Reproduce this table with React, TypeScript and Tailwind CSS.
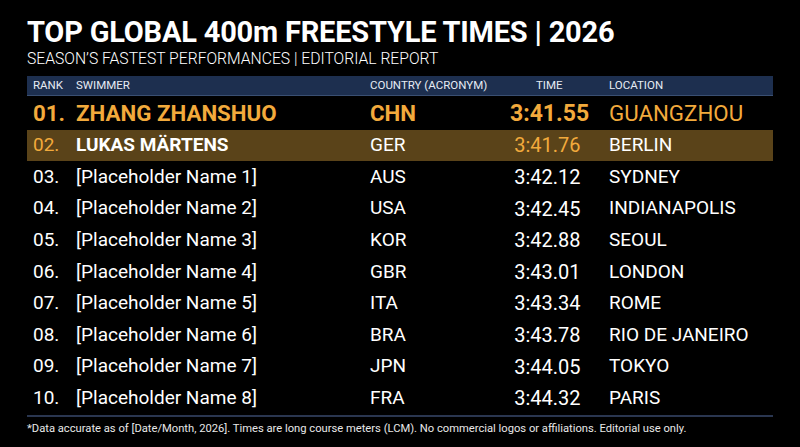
import React from 'react';

type Row = { rank: string; name: string; country: string; time: string; location: string };

const ROWS: Row[] = [
  { rank: '01.', name: 'ZHANG ZHANSHUO', country: 'CHN', time: '3:41.55', location: 'GUANGZHOU' },
  { rank: '02.', name: 'LUKAS MÄRTENS', country: 'GER', time: '3:41.76', location: 'BERLIN' },
  { rank: '03.', name: '[Placeholder Name 1]', country: 'AUS', time: '3:42.12', location: 'SYDNEY' },
  { rank: '04.', name: '[Placeholder Name 2]', country: 'USA', time: '3:42.45', location: 'INDIANAPOLIS' },
  { rank: '05.', name: '[Placeholder Name 3]', country: 'KOR', time: '3:42.88', location: 'SEOUL' },
  { rank: '06.', name: '[Placeholder Name 4]', country: 'GBR', time: '3:43.01', location: 'LONDON' },
  { rank: '07.', name: '[Placeholder Name 5]', country: 'ITA', time: '3:43.34', location: 'ROME' },
  { rank: '08.', name: '[Placeholder Name 6]', country: 'BRA', time: '3:43.78', location: 'RIO DE JANEIRO' },
  { rank: '09.', name: '[Placeholder Name 7]', country: 'JPN', time: '3:44.05', location: 'TOKYO' },
  { rank: '10.', name: '[Placeholder Name 8]', country: 'FRA', time: '3:44.32', location: 'PARIS' },
];

export default function App() {
  return (
    <div className="w-[800px] h-[447px] bg-black text-white px-[27px] pt-[15px] font-['Roboto',sans-serif] overflow-hidden">
      <h1 className="text-[29px] font-bold leading-[34px] tracking-[-0.2px]">TOP GLOBAL 400m FREESTYLE TIMES | 2026</h1>
      <p className="text-[15.7px] font-light leading-[19px]">SEASON’S FASTEST PERFORMANCES | EDITORIAL REPORT</p>

      {/* Table header */}
      <div className="mt-[8px] w-[746px] h-[20px] bg-[#1d2f4f] border-b border-[#3a4f72] flex items-center text-[11.5px] text-[#e6ebf3]">
        <div className="w-[49px] pl-[6px]">RANK</div>
        <div className="w-[294px]">SWIMMER</div>
        <div className="w-[166px]">COUNTRY (ACRONYM)</div>
        <div className="w-[73px]">TIME</div>
        <div className="flex-1">LOCATION</div>
      </div>

      {/* Rows */}
      <div className="w-[746px] pt-[2px] border-b-2 border-[#2a3650] pb-[1px]">
        {ROWS.map((r, i) => {
          const first = i === 0;
          const second = i === 1;
          return (
            <div
              key={r.rank}
              className={`h-[31.6px] flex items-center ${second ? 'bg-[#5a4319]' : ''} ${
                first ? 'text-[#f2aa3c] font-bold text-[22.3px]' : 'text-[19px]'
              }`}
            >
              <div className={`w-[49px] pl-[6px] ${second ? 'text-[#f2aa3c]' : ''}`}>{r.rank}</div>
              <div className={`w-[294px] ${second ? 'font-bold' : ''}`}>{r.name}</div>
              <div className="w-[140px]">{r.country}</div>
              {first ? (
                <div className="w-[77px] text-right text-[23px]">{r.time}</div>
              ) : (
                <div className={`w-[71px] pr-[0.5px] text-right text-[20px] ${second ? 'text-[#f2aa3c]' : ''}`}>{r.time}</div>
              )}
              <div className={`flex-1 ${first ? 'pl-[22px] font-normal' : 'pl-[28px]'}`}>{r.location}</div>
            </div>
          );
        })}
      </div>

      <p className="mt-[4px] text-[11.2px] text-[#e8e8e8]">
        *Data accurate as of [Date/Month, 2026]. Times are long course meters (LCM). No commercial logos or affiliations. Editorial use only.
      </p>
    </div>
  );
}
